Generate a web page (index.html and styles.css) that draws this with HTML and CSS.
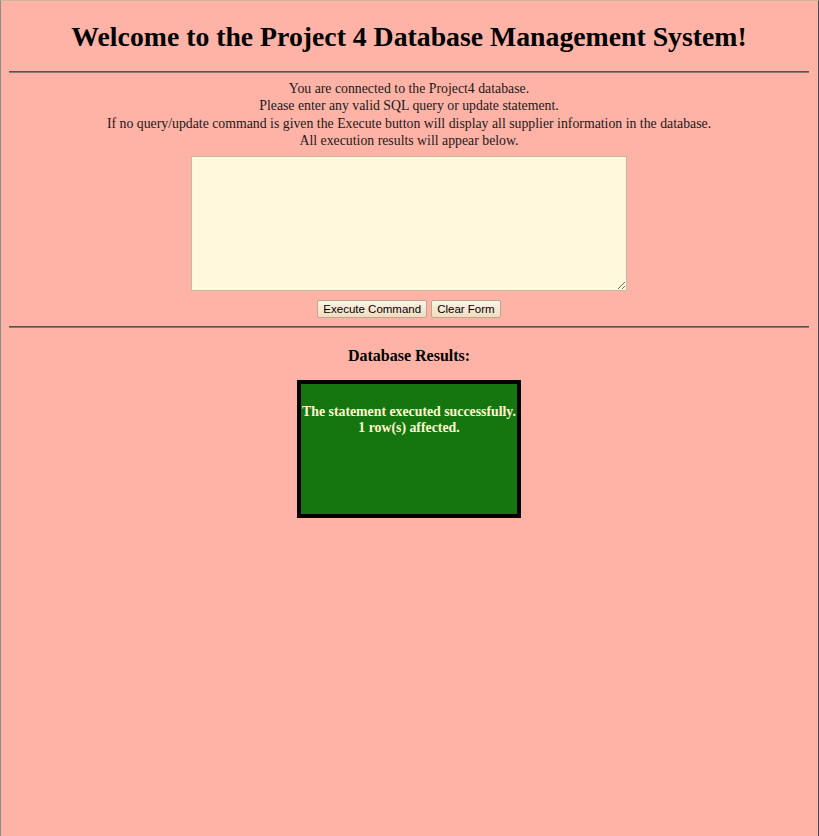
FILE: index.html
```html
<!DOCTYPE html>
<html>
<head>
<meta charset="utf-8">
<title>Project 4</title>
<link rel="stylesheet" href="styles.css">
</head>
<body>
<h1 class="title">Welcome to the Project 4 Database Management System!</h1>
<hr class="rule">
<div class="intro">
You are connected to the Project4 database.<br>
Please enter any valid SQL query or update statement.<br>
If no query/update command is given the Execute button will display all supplier information in the database.<br>
All execution results will appear below.
</div>
<form class="form">
<textarea class="query"></textarea>
<div class="buttons">
<button type="button" class="btn">Execute Command</button>
<button type="button" class="btn">Clear Form</button>
</div>
</form>
<hr class="rule rule-lower">
<h3 class="results-title">Database Results:</h3>
<div class="result-box">
<p class="result-text">The statement executed successfully.<br>1 row(s) affected.</p>
</div>
</body>
</html>
```
FILE: styles.css
```css
html {
  height: 100%;
  box-sizing: border-box;
  border-top: 1px solid #cdb59e;
  border-left: 1px solid #8c8c8c;
  border-right: 1px solid #3b4a68;
  background: #ffb3a7;
}
body {
  margin: 8px 9px 8px 8px;
  font-family: "Liberation Serif", "Times New Roman", serif;
  color: #1a1a1a;
  text-align: center;
}
.title {
  font-size: 27.75px;
  font-weight: bold;
  margin: 12px 0 18px;
  color: #000;
}
.rule {
  border: none;
  border-top: 1px solid #5a5048;
  border-bottom: 1px solid #8a7a70;
  margin: 0;
}
.intro {
  font-size: 13.8px;
  line-height: 17.3px;
  margin-top: 7px;
}
.form {
  margin-top: 7px;
}
.query {
  display: block;
  margin: 0 auto;
  width: 436px;
  height: 135px;
  box-sizing: border-box;
  background: #fff8dc;
  border: 1px solid #c8b8a0;
  resize: both;
}
.buttons {
  margin-top: 9px;
  display: flex;
  justify-content: center;
  gap: 4px;
}
.btn {
  font-family: Arial, "Liberation Sans", sans-serif;
  font-size: 11.5px;
  color: #000;
  height: 18px;
  padding: 0 5px;
  border: 1px solid #b8a890;
  border-radius: 2px;
  background: linear-gradient(#fdf3e6, #f3dcbe);
}
.rule-lower {
  margin-top: 8px;
}
.results-title {
  font-size: 16px;
  margin: 19px 0 15px;
  color: #000;
}
.result-box {
  width: 216px;
  height: 130px;
  margin: 0 auto;
  border: 4px solid #000;
  background: #15760f;
}
.result-text {
  margin: 20px 0 0;
  font-size: 13.8px;
  font-weight: bold;
  line-height: 16px;
  color: #fff8d0;
}
```
